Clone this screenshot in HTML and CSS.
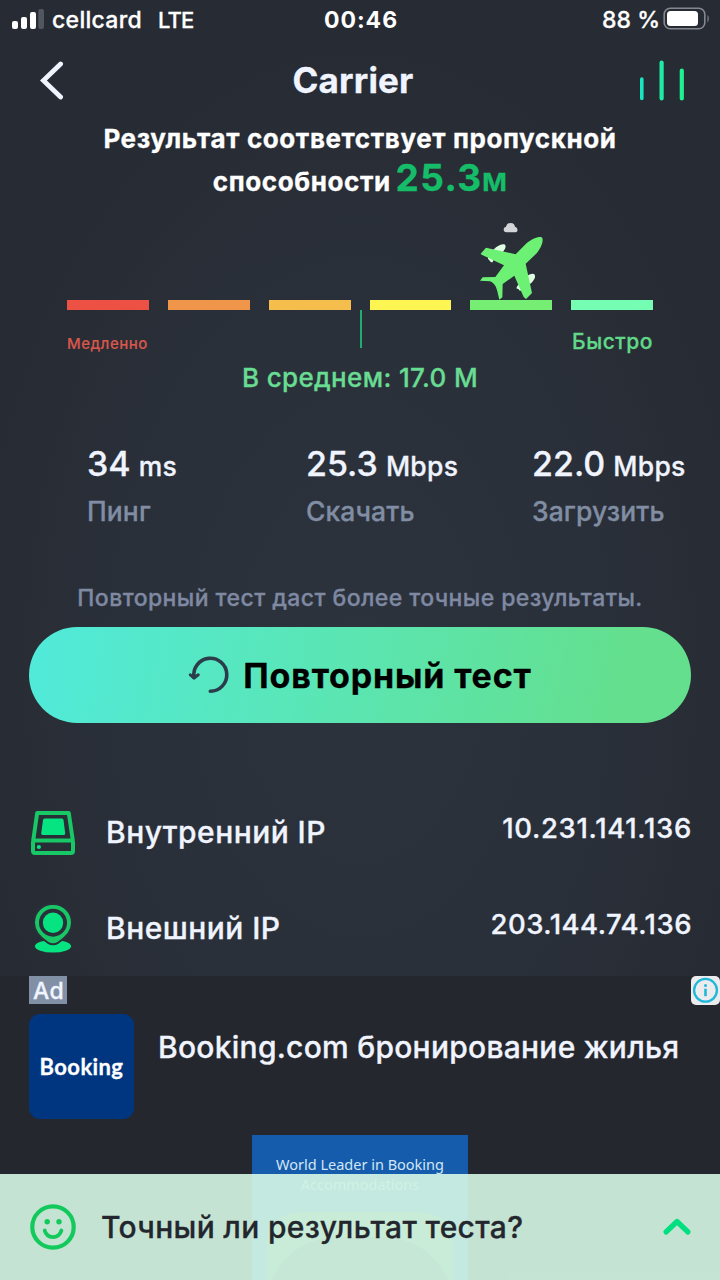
FILE: index.html
```
<!DOCTYPE html>
<html lang="ru">
<head>
<meta charset="utf-8">
<title>Carrier</title>
<link rel="stylesheet" href="styles.css">
</head>
<body>
<div class="screen">
  <div class="status">
    <div class="status-left">
      <svg class="signal" width="32" height="20" viewBox="0 0 32 20"><rect x="0" y="12" width="6" height="8" rx="2" fill="#fff"/><rect x="9" y="8" width="6" height="12" rx="2" fill="#fff"/><rect x="18" y="3" width="6" height="17" rx="2" fill="#fff"/><rect x="26.300" y="0" width="5.700" height="20" rx="2" fill="#52565e"/></svg>
      <span class="operator">cellcard</span>
      <span class="network">LTE</span>
    </div>
    <span class="time">00:46</span>
    <div class="status-right">
      <span class="charge">88 %</span>
      <svg width="47" height="24" viewBox="0 0 47 24"><rect x="1.200" y="1.200" width="40.600" height="20.600" rx="6" fill="none" stroke="#84878e" stroke-width="1.600"/><rect x="4" y="4" width="31" height="15" rx="3.500" fill="#fff"/><path d="M44.500 8c1.700 1.500 1.700 6 0 7.500z" fill="#84878e"/></svg>
    </div>
  </div>

  <header class="header">
    <svg width="24" height="40" viewBox="0 0 24 40"><path d="M20.600 4L3.400 20.500L20.600 37" fill="none" stroke="#f0f4ff" stroke-width="4.800" stroke-linecap="round" stroke-linejoin="miter"/></svg>
    <h1 class="title">Carrier</h1>
    <svg width="46" height="42" viewBox="0 0 46 42"><g fill="none" stroke-width="4.200" stroke-linecap="round"><path d="M1.800 20V39.500" stroke="#19e6c0" stroke-width="3.600"/><path d="M21.600 3.500V39.500" stroke="#1eeca6"/><path d="M41.800 11.500V39.500" stroke="#1ff092"/></g></svg>
  </header>

  <h2 class="result">Результат соответствует пропускной<br>способности <span class="speed">25.3<span class="speed-unit">м</span></span></h2>

  <section class="scale">
    <div class="bars">
      <i class="bar red"></i><i class="bar orange"></i><i class="bar amber"></i><i class="bar yellow"></i><i class="bar green"></i><i class="bar mint"></i>
    </div>
    <svg class="plane" width="70" height="80" viewBox="111 30 210 240">
      <path d="M199 67C189 67 188 52 198 50C200 43 204 39 212 39C220 39 224 44 225 50C235 53 235 67 225 67Z" fill="#d3d4d8"/>
      <path d="M195 104C202 113 187 132 159 152L158 157L153 157L144 146L144 135L168 112C180 103 190 101 195 104ZM283 193C290 202 280 218 248 238L240 243L236 238L229 235L232 228L252 205C267 191 280 189 283 193Z" fill="#dfffe3"/>
      <path d="M304 82C312 84 308 108 290 130L257 161L276 249L258 267L251 261L223 197L188 222L187 262L178 269L172 244C168 226 160 218 150 214L120 212L128 202L166 201L192 166L125 134L122 131L138 113L227 133L258 101C275 86 298 78 304 82Z" fill="#6df175"/>
    </svg>
    <i class="tick"></i>
    <div class="scale-labels"><span class="slow">Медленно</span><span class="fast">Быстро</span></div>
    <p class="average">В среднем: 17.0 М</p>
  </section>

  <section class="stats">
    <div class="stat"><div class="value">34<span class="unit">ms</span></div><div class="name">Пинг</div></div>
    <div class="stat"><div class="value">25.3<span class="unit">Mbps</span></div><div class="name">Скачать</div></div>
    <div class="stat"><div class="value">22.0<span class="unit">Mbps</span></div><div class="name">Загрузить</div></div>
  </section>

  <p class="note">Повторный тест даст более точные результаты.</p>
  <button class="retest">
    <svg width="42" height="40" viewBox="0 0 42 40"><path d="M22.300 36.300A16.500 16.500 0 1 0 6 22.500" fill="none" stroke="#2b3d4b" stroke-width="3.600" stroke-linecap="round"/><path d="M2.300 19.800L6.100 23L10.300 19.800" fill="#2b3d4b" stroke="#2b3d4b" stroke-width="3" stroke-linecap="round" stroke-linejoin="round"/></svg>
    <span>Повторный тест</span>
  </button>

  <section class="addresses">
    <div class="address">
      <svg width="44" height="50" viewBox="0 -4 44 50"><g fill="none" stroke="#18c765" stroke-width="4" stroke-linejoin="round"><path d="M2.200 29.500L6.200 2H37.800L41.800 29.500"/><rect x="2" y="29.500" width="40" height="12.600" rx="2"/></g><path d="M13.500 7.500H31Q32.300 7.500 32.500 9L34.200 22.300Q34.400 24 32.800 24H11.600Q10 24 10.200 22.300L12 9Q12.200 7.500 13.500 7.500Z" fill="#06e482"/><circle cx="7.900" cy="36" r="2.100" fill="#06e482"/></svg>
      <span class="address-name">Внутренний IP</span><span class="address-value local">10.231.141.136</span>
    </div>
    <div class="address">
      <svg width="44" height="50" viewBox="0 0 44 50"><ellipse cx="22" cy="43.300" rx="18" ry="6.300" fill="#06e482"/><path class="pin-gap" d="M22 4C12.500 4 6 11 6 19.800C6 28.500 13.500 34 18.500 37.200Q22 39.300 25.500 37.200C30.500 34 38 28.500 38 19.800C38 11 31.500 4 22 4Z"/><path d="M22 4C12.500 4 6 11 6 19.800C6 28.500 13.500 34 18.500 37.200Q22 39.300 25.500 37.200C30.500 34 38 28.500 38 19.800C38 11 31.500 4 22 4Z" fill="#18c765" stroke="#18c765" stroke-width="4"/><circle cx="22" cy="19.700" r="14" fill="#2a303a"/><circle cx="22" cy="19.700" r="10.200" fill="#06e482"/></svg>
      <span class="address-name">Внешний IP</span><span class="address-value">203.144.74.136</span>
    </div>
  </section>

  <section class="ad">
    <div class="ad-top">
      <span class="ad-tag">Ad</span>
      <span class="ad-info"><svg width="29" height="29" viewBox="0 0 29 29"><circle cx="14.500" cy="14.300" r="11.400" fill="none" stroke="#20b8d8" stroke-width="2.300"/><circle cx="14.500" cy="9.600" r="1.500" fill="#20b8d8"/><rect x="13.200" y="12.700" width="2.600" height="7.500" fill="#20b8d8"/></svg></span>
    </div>
    <div class="ad-body">
      <div class="ad-logo">Booking</div>
      <div class="ad-title">Booking.com бронирование жилья</div>
    </div>
    <div class="banner">
      <p class="banner-text">World Leader in Booking<br><span class="banner-line">Accommodations</span></p>
      <svg class="banner-art" width="188" height="68" viewBox="0 0 188 68"><path d="M0 68V40Q2 0 35 0H153Q186 0 188 40V68Z" fill="#487a62"/><path d="M6 68Q24 28 68 25H120Q164 28 182 68Z" fill="#2c4d48"/></svg>
    </div>
  </section>

  <footer class="feedback">
    <svg width="46" height="46" viewBox="0 0 46 46"><circle cx="23" cy="23" r="20.700" fill="none" stroke="#12c95c" stroke-width="4.200"/><circle cx="17.200" cy="17.700" r="2.700" fill="#12c95c"/><circle cx="29" cy="17.700" r="2.700" fill="#12c95c"/><path d="M14.700 26.500C17 35.200 29.200 35.200 31.400 26.500" fill="none" stroke="#12c95c" stroke-width="3.800" stroke-linecap="round"/></svg>
    <span class="question">Точный ли результат теста?</span>
    <svg width="30" height="20" viewBox="0 0 30 20"><path d="M4 15L15 4.500L26 15" fill="none" stroke="#02df80" stroke-width="5.200" stroke-linecap="round" stroke-linejoin="round"/></svg>
  </footer>
</div>
</body>
</html>
```
FILE: styles.css
```
* { box-sizing: border-box; margin: 0; padding: 0; }
body { width: 720px; height: 1280px; overflow: hidden; background: #272a33; }
.screen {
  position: relative;
  width: 720px;
  height: 1280px;
  overflow: hidden;
  display: flex;
  flex-direction: column;
  font-family: Inter, "Noto Sans", sans-serif;
  font-weight: 500;
  -webkit-text-stroke: 0.3px currentColor;
  color: #f0f4ff;
  background: radial-gradient(ellipse 400px 640px at 50% 52%, #2c333d 0%, #2a303a 55%, #272b33 100%);
}
.screen > * { flex-shrink: 0; }
svg { display: block; flex-shrink: 0; }

.status { height: 40px; display: grid; grid-template-columns: 1fr auto 1fr; align-items: center; padding: 0 10px 0 12px; font-size: 23px; color: #fff; }
.status-left, .status-right { display: flex; align-items: center; }
.status-left { letter-spacing: 0.3px; }
.signal { margin-top: -2px; }
.operator { margin-left: 8px; }
.network { margin-left: 16px; font-size: 22px; letter-spacing: -0.9px; }
.time { font-weight: 700; letter-spacing: 1px; -webkit-text-stroke-width: 0; }
.status-right { justify-content: flex-end; gap: 3px; letter-spacing: 0; }
.status-right svg { margin-top: -2px; }

.header { height: 77px; padding: 3px 34px 0 40px; display: flex; align-items: center; justify-content: space-between; }
.title { font-size: 35px; line-height: 40px; font-weight: 700; letter-spacing: 0.15px; margin-left: 2px; }

.result { height: 86px; font-size: 26px; line-height: 43px; font-weight: 700; letter-spacing: 0.6px; text-align: center; color: #fff; }
.speed { font-size: 37px; line-height: 0; color: #15bd69; letter-spacing: 1.4px; margin-left: -2px; }
.speed-unit { margin-left: -1px; letter-spacing: 0; font-size: 32px; font-weight: 600; }

.scale { position: relative; margin: 97px 67px 0; }
.bars { display: grid; grid-template-columns: repeat(6, 1fr); column-gap: 19px; }
.bar { height: 10px; }
.red { background: #ec5144; }
.orange { background: #f0964a; }
.amber { background: #f5bd4c; }
.yellow { background: #fdf552; }
.green { background: #75ee73; }
.mint { background: #75fdb4; }
.plane { position: absolute; left: 410px; top: -80px; }
.tick { position: absolute; left: 293px; top: 10px; width: 2px; height: 38px; background: #20ad70; }
.scale-labels { display: flex; justify-content: space-between; align-items: baseline; height: 30px; margin-top: 17px; line-height: 30px; }
.slow { font-size: 15px; letter-spacing: 0.5px; color: #d8574c; -webkit-text-stroke-width: 0.15px; }
.fast { font-size: 21px; letter-spacing: 0.55px; color: #61d889; }
.average { margin-top: 6px; font-size: 26px; line-height: 30px; letter-spacing: 0.35px; text-align: center; color: #68dc92; }

.stats { display: grid; grid-template-columns: 219px 226px 1fr; padding-left: 87px; margin-top: 51px; }
.stat { display: flex; flex-direction: column; gap: 12px; }
.value { font-size: 34px; line-height: 40px; letter-spacing: 0; white-space: nowrap; }
.unit { font-size: 26.5px; line-height: 1; letter-spacing: 0.3px; margin-left: 8px; }
.name { font-size: 26.5px; line-height: 30px; letter-spacing: 0.1px; color: #808da3; }

.note { margin-top: 57px; font-size: 23px; line-height: 30px; letter-spacing: 0.41px; text-align: center; color: #7f89a2; }
.retest {
  height: 96px;
  margin: 14px 29px 0;
  border: 0;
  border-radius: 48px;
  display: flex;
  align-items: center;
  justify-content: center;
  gap: 13px;
  background: linear-gradient(100deg, #51ead8 3%, #5be5b0 50%, #64df8d 90%);
  font-family: inherit;
  font-size: 34px;
  font-weight: 700;
  letter-spacing: 0.85px;
  color: #000;
}

.addresses { margin-top: 61px; }
.address { height: 96px; padding: 0 28px 0 31px; display: flex; align-items: center; }
.address-name { margin-left: 31px; font-size: 30px; letter-spacing: 0.45px; }
.address-value { margin-left: auto; padding-bottom: 8px; font-size: 27.5px; letter-spacing: 0.48px; }
.local { letter-spacing: 0.68px; }
.pin-gap { fill: #2a303a; stroke: #2a303a; stroke-width: 8px; }

.ad { height: 304px; background: #25272e; }
.ad-top { display: flex; justify-content: space-between; padding-left: 29px; }
.ad-tag { width: 38px; height: 28px; padding: 1px 0 0 4px; font-size: 23px; line-height: 28px; letter-spacing: 0.3px; background: #8290a6; }
.ad-info { width: 29px; height: 29px; border-radius: 5px; background: #ecebee; }
.ad-body { display: flex; gap: 24px; padding: 9px 0 0 29px; }
.ad-logo { width: 105px; height: 105px; border-radius: 11px; background: #003580; color: #fff; text-align: center; font: 700 22px/106px Lato, sans-serif; letter-spacing: 0.4px; }
.ad-title { margin-top: 15px; font-size: 30px; line-height: 36px; letter-spacing: 0.26px; white-space: nowrap; }
.banner { width: 216px; margin: 16px auto 0 252px; height: 145px; padding-top: 19px; background: #155dac; overflow: hidden; }
.banner-text { font: 400 14.5px/20px "Noto Sans", sans-serif; text-align: center; color: #d3e5f5; -webkit-text-stroke-width: 0; }
.banner-line { color: #8fbccb; }
.banner-art { margin: 18px 0 0 14px; }

.feedback { position: absolute; left: 0; right: 0; bottom: 0; height: 106px; padding: 0 28px 0 30px; display: flex; align-items: center; background: rgba(215, 248, 229, 0.9); }
.question { flex: 1; margin-left: 25px; font-size: 30px; letter-spacing: 0.32px; color: #23272d; }
```
